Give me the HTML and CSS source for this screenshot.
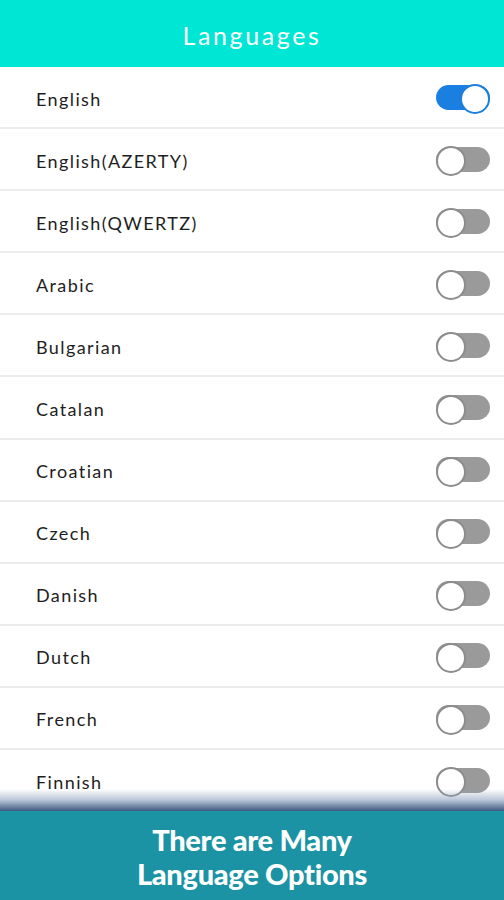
FILE: index.html
```html
<!DOCTYPE html>
<html>
<head>
<meta charset="utf-8">
<link rel="stylesheet" href="styles.css">
</head>
<body>
<div class="screen">
  <header class="topbar">Languages</header>
  <ul class="list">
    <li class="row"><span>English</span><span class="toggle on"></span></li>
    <li class="row"><span>English(AZERTY)</span><span class="toggle"></span></li>
    <li class="row"><span>English(QWERTZ)</span><span class="toggle"></span></li>
    <li class="row"><span>Arabic</span><span class="toggle"></span></li>
    <li class="row"><span>Bulgarian</span><span class="toggle"></span></li>
    <li class="row"><span>Catalan</span><span class="toggle"></span></li>
    <li class="row"><span>Croatian</span><span class="toggle"></span></li>
    <li class="row"><span>Czech</span><span class="toggle"></span></li>
    <li class="row"><span>Danish</span><span class="toggle"></span></li>
    <li class="row"><span>Dutch</span><span class="toggle"></span></li>
    <li class="row"><span>French</span><span class="toggle"></span></li>
    <li class="row"><span>Finnish</span><span class="toggle"></span></li>
  </ul>
  <div class="banner">
    <div class="shade"></div>
    <p>There are Many<br>Language Options</p>
  </div>
</div>
</body>
</html>
```
FILE: styles.css
```css
* { box-sizing: border-box; }
html, body { margin: 0; padding: 0; }
body { width: 504px; height: 900px; overflow: hidden; background: #fff; font-family: "Lato", "Noto Sans", sans-serif; }
.screen { position: relative; width: 504px; height: 900px; display: flex; flex-direction: column; }
.topbar {
  height: 67px; background: #00e6d5; color: #fff;
  display: flex; align-items: center; justify-content: center;
  font-size: 25px; font-weight: 400; letter-spacing: 2.6px; padding-top: 3px;
}
.list { list-style: none; margin: 0; padding: 0; flex: 1; overflow: hidden; }
.row {
  height: 62.1px; display: flex; align-items: center; justify-content: space-between;
  padding: 3px 14px 0 36px; border-bottom: 2px solid #ececec;
  font-size: 18px; color: #1e1e1e; letter-spacing: 1.4px;
}
.toggle {
  position: relative; width: 54px; height: 25px; border-radius: 13px; background: #9a9a9a; margin-top: -3px;
}
.toggle::after {
  content: ""; position: absolute; left: 0; top: -0.5px; width: 26px; height: 26px; border-radius: 50%;
  background: #fff; border: 2px solid #8c8c8c;
}
.toggle.on { background: #1a7fe0; }
.toggle.on::after { left: auto; right: 0; border-color: #1a7fe0; }
.banner {
  position: absolute; left: 0; right: 0; bottom: 0; height: 89px;
  background: #1b93a5; display: flex; align-items: center; justify-content: center;
}
.shade {
  position: absolute; left: 0; right: 0; top: -22px; height: 22px;
  background: linear-gradient(to bottom, rgba(255,255,255,0), rgba(140,160,190,0.6) 50%, #3d5a80);
}
.banner p {
  margin: 0; color: #fff; text-align: center; font-family: "Lato", sans-serif; font-weight: 900;
  font-size: 29px; line-height: 34px; letter-spacing: -0.3px; padding-top: 2px;
}
```
